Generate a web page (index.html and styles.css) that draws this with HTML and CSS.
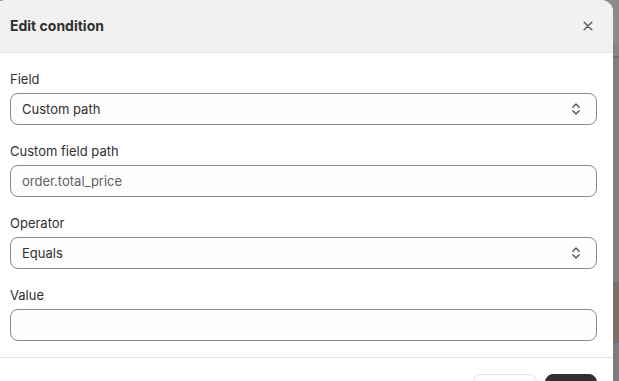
FILE: index.html
```html
<!DOCTYPE html>
<html lang="en">
<head>
<meta charset="utf-8">
<title>Edit condition</title>
<link rel="stylesheet" href="styles.css">
</head>
<body>
<div class="backdrop">
  <div class="modal">
    <div class="modal-header">
      <h2 class="modal-title">Edit condition</h2>
      <button class="close-btn" aria-label="Close">
        <svg width="20" height="20" viewBox="0 0 20 20"><path d="M6.2 6.2l7.6 7.6M13.8 6.2l-7.6 7.6" stroke="#616161" stroke-width="1.5" stroke-linecap="round" fill="none"/></svg>
      </button>
    </div>
    <div class="modal-body">
      <div class="field">
        <label class="label">Field</label>
        <div class="control select">
          <span class="value">Custom path</span>
          <svg class="chev" width="16" height="16" viewBox="0 0 16 16"><path d="M4.8 6.2 8 3l3.2 3.2M4.8 9.8 8 13l3.2-3.2" stroke="#4a4a4a" stroke-width="1.25" stroke-linecap="round" stroke-linejoin="round" fill="none"/></svg>
        </div>
      </div>
      <div class="field">
        <label class="label">Custom field path</label>
        <div class="control">
          <span class="value placeholder">order.total_price</span>
        </div>
      </div>
      <div class="field">
        <label class="label">Operator</label>
        <div class="control select">
          <span class="value">Equals</span>
          <svg class="chev" width="16" height="16" viewBox="0 0 16 16"><path d="M4.8 6.2 8 3l3.2 3.2M4.8 9.8 8 13l3.2-3.2" stroke="#4a4a4a" stroke-width="1.25" stroke-linecap="round" stroke-linejoin="round" fill="none"/></svg>
        </div>
      </div>
      <div class="field">
        <label class="label">Value</label>
        <div class="control">
          <span class="value"></span>
        </div>
      </div>
    </div>
    <div class="modal-footer">
      <button class="btn btn-secondary">Cancel</button>
      <button class="btn btn-primary">Save</button>
    </div>
  </div>
</div>
</body>
</html>
```
FILE: styles.css
```css
* { box-sizing: border-box; }
html, body { margin: 0; padding: 0; }
body {
  font-family: Inter, "Noto Sans", sans-serif;
  color: #303030;
  overflow: hidden;
  height: 381px;
  background: linear-gradient(to bottom,
    #8b8b8b 0, #8b8b8b 44px,
    #858585 44px, #858585 56px,
    #6e6e6e 56px, #6e6e6e 58px,
    #7f7f7f 58px, #7f7f7f 282px,
    #7b7068 282px, #7b7068 341px,
    #6f6f6f 341px, #6f6f6f 343px,
    #7d7d7d 343px);
}
.backdrop { height: 381px; }
.modal {
  width: 619px;
  margin-left: -6px;
  background: #ffffff;
  border-radius: 12px 12px 0 0;
  overflow: hidden;
}
.modal-header {
  height: 53px;
  background: #f1f1f1;
  border-bottom: 1px solid #e3e3e3;
  display: flex;
  align-items: center;
  justify-content: space-between;
  padding: 0 15px 0 16px;
}
.modal-title {
  margin: 0;
  font-size: 14px;
  font-weight: 650;
  line-height: 20px;
  color: #303030;
}
.close-btn {
  width: 20px; height: 20px;
  padding: 0; border: 0; background: none;
  display: flex;
}
.modal-body {
  padding: 16px;
  display: flex;
  flex-direction: column;
  gap: 16px;
  border-bottom: 1px solid #e3e3e3;
}
.field { display: flex; flex-direction: column; gap: 4px; }
.label {
  font-size: 13px;
  line-height: 20px;
  color: #303030;
}
.control {
  height: 32px;
  border: 1px solid #8a8a8a;
  border-radius: 8px;
  background: #fdfdfd;
  display: flex;
  align-items: center;
  padding: 0 11px;
  font-size: 13px;
  line-height: 20px;
}
.select { justify-content: space-between; padding-right: 12px; }
.value { color: #303030; }
.placeholder { color: #616161; }
.chev { display: block; }
.modal-footer {
  padding: 16px;
  display: flex;
  justify-content: flex-end;
  gap: 8px;
}
.btn {
  height: 28px;
  border-radius: 8px;
  font-family: Inter, "Noto Sans", sans-serif;
  font-size: 12px;
  font-weight: 550;
  padding: 0 12px;
}
.btn-secondary { width: 64px; background: #ffffff; border: 1px solid #e3e3e3; color: #303030; }
.btn-primary { width: 52px; background: #303030; border: 1px solid #303030; color: #ffffff; }
```
